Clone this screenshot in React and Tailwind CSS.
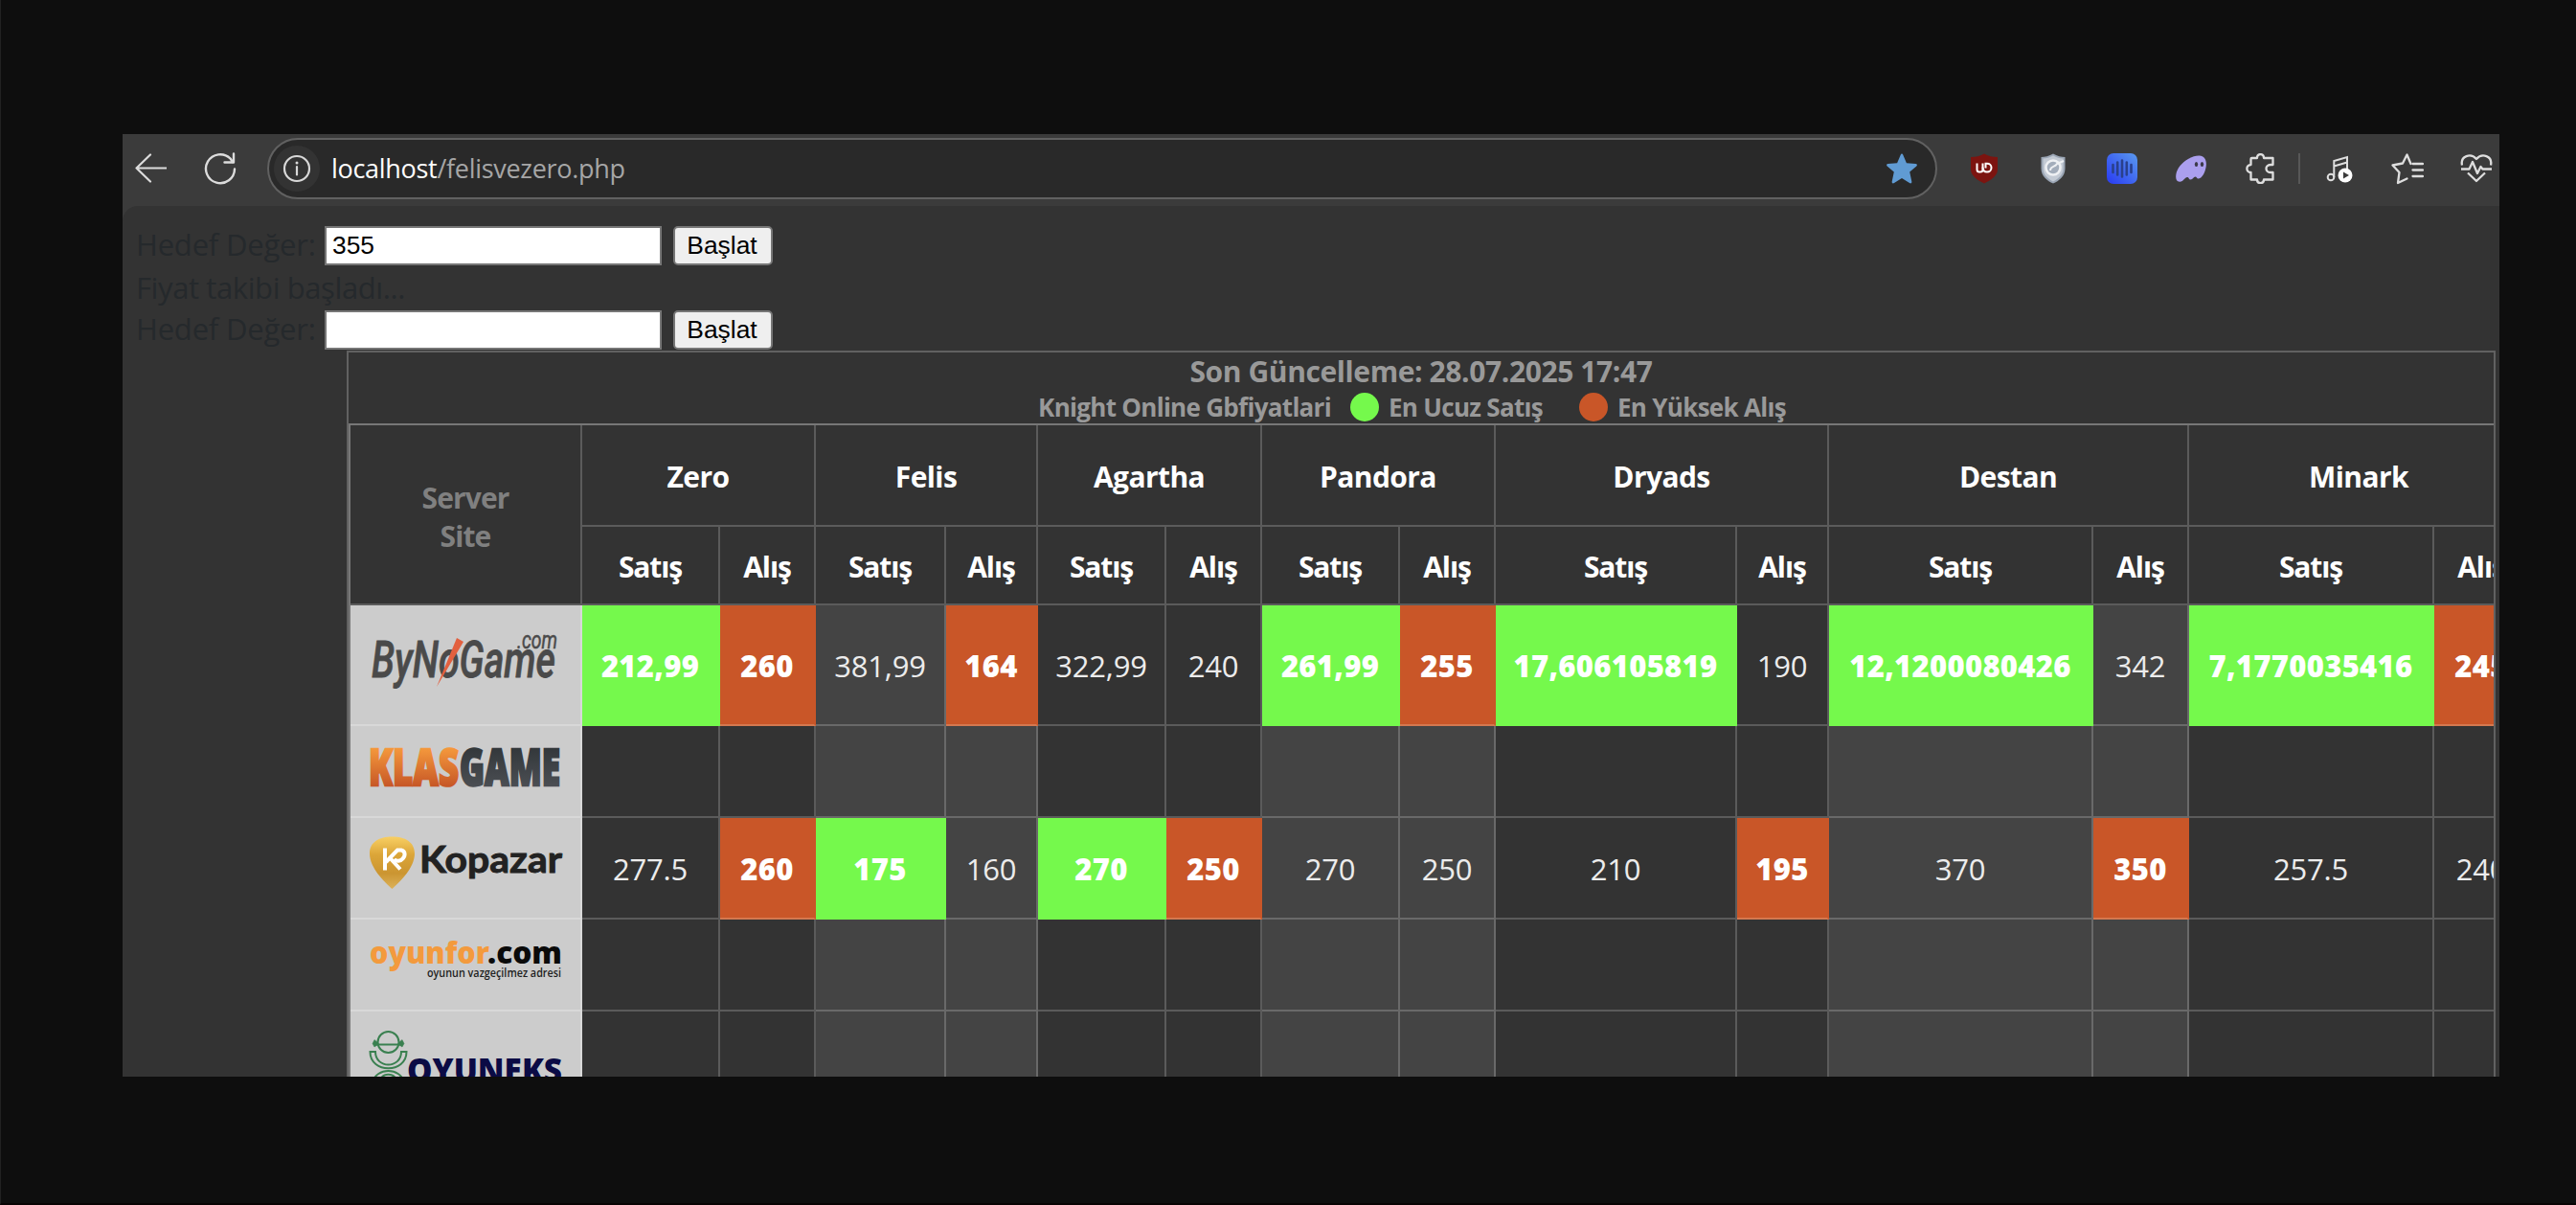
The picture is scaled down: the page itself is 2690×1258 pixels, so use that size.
import clsx from 'clsx';

const servers = ['Zero', 'Felis', 'Agartha', 'Pandora', 'Dryads', 'Destan', 'Minark'];

// [value, highlight] pairs ordered as Satış / Alış for every server
const bynogame = [
  ['212,99', 'low'], ['260', 'high'],
  ['381,99'], ['164', 'high'],
  ['322,99'], ['240'],
  ['261,99', 'low'], ['255', 'high'],
  ['17,606105819', 'low'], ['190'],
  ['12,1200080426', 'low'], ['342'],
  ['7,1770035416', 'low'], ['245', 'high'],
];

const kopazar = [
  ['277.5'], ['260', 'high'],
  ['175', 'low'], ['160'],
  ['270', 'low'], ['250', 'high'],
  ['270'], ['250'],
  ['210'], ['195', 'high'],
  ['370'], ['350', 'high'],
  ['257.5'], ['240'],
];

const empty = Array.from({ length: 14 }, () => ['']);

const ByNoGameLogo = () => (
  <svg width="240" height="124" viewBox="0 0 240 124">
    <g fill="#4a4a4a" stroke="#4a4a4a" fontFamily="Roboto, sans-serif" fontStyle="italic">
      <text x="22" y="75" fontSize="54" fontWeight="500" strokeWidth="0.8" textLength="192" lengthAdjust="spacingAndGlyphs">ByNoGame</text>
      <text x="174" y="45" fontSize="25" strokeWidth="0.5" textLength="42" lengthAdjust="spacingAndGlyphs">.com</text>
    </g>
    <path d="M111 34L118 38L90 85Z" fill="#e2603f" />
  </svg>
);

const KlasGameLogo = () => (
  <svg width="240" height="94" viewBox="0 0 240 94">
    <defs>
      <linearGradient id="klas" x1="0" y1="0" x2="0" y2="1">
        <stop offset="0.25" stopColor="#f4983c" />
        <stop offset="0.8" stopColor="#c65626" />
      </linearGradient>
      <linearGradient id="game" x1="0" y1="0" x2="0" y2="1">
        <stop offset="0.25" stopColor="#33383b" />
        <stop offset="0.8" stopColor="#4b4e53" />
      </linearGradient>
    </defs>
    <g fontFamily="'Open Sans', sans-serif" fontSize="53" fontWeight="800" strokeWidth="2.5">
      <text x="19" y="62" fill="url(#klas)" stroke="url(#klas)" textLength="94" lengthAdjust="spacingAndGlyphs">KLAS</text>
      <text x="114" y="62" fill="url(#game)" stroke="url(#game)" textLength="105" lengthAdjust="spacingAndGlyphs">GAME</text>
    </g>
  </svg>
);

const KopazarLogo = () => (
  <svg width="240" height="104" viewBox="0 0 240 104">
    <defs>
      <linearGradient id="pick" x1="0" y1="0" x2="0" y2="1">
        <stop offset="0" stopColor="#f8cf63" />
        <stop offset="0.35" stopColor="#dba538" />
        <stop offset="0.7" stopColor="#cb9531" />
        <stop offset="1" stopColor="#dcb25a" />
      </linearGradient>
    </defs>
    <path d="M43.500 19.500C57 19.500 67 25 67 37C67 52 52 66 43.500 74C35 66 20 52 20 37C20 25 30 19.500 43.500 19.500Z" fill="url(#pick)" />
    {/* Monogram: K stem and leg with a tilted P loop */}
    <g fill="none" stroke="#fff" strokeWidth="4">
      <path d="M36 31.500V54.500" />
      <path d="M37 46L49 33.500H53C57.500 34.500 57.500 39.500 54.500 42.500C52.500 45 48 46 45.500 43" />
      <path d="M41.500 42L52 53.500" />
    </g>
    <text x="72" y="57" fill="#222" fontFamily="Lato, sans-serif" fontWeight="700" fontSize="38" textLength="149" lengthAdjust="spacingAndGlyphs" stroke="#222" strokeWidth="0.9">Kopazar</text>
  </svg>
);

const OyunforLogo = () => (
  <svg width="240" height="94" viewBox="0 0 240 94">
    <g fontFamily="'Open Sans', sans-serif" fontWeight="800">
      <text x="20" y="46" fontSize="32" fill="#f39a3d" textLength="125" lengthAdjust="spacingAndGlyphs">oyunfor</text>
      <text x="143" y="46" fontSize="32" fill="#0a0a0a" textLength="78" lengthAdjust="spacingAndGlyphs">.com</text>
      <text x="80" y="60" fontSize="13" fontWeight="600" fill="#222" textLength="140" lengthAdjust="spacingAndGlyphs">oyunun vazgeçilmez adresi</text>
    </g>
  </svg>
);

const OyuneksLogo = () => (
  <svg width="240" height="94" viewBox="0 0 240 94">
    <g fill="none" stroke="#3a8050" strokeWidth="2">
      <circle cx="39.500" cy="32" r="11" />
      <path d="M26 34.500H53" />
      <path d="M25 29.500L28 32V35L25 37L23 33.500ZM54 29.500L51 32V35L54 37L56 33.500Z" fill="#3a8050" strokeWidth="0.5" />
      <path d="M20.500 42H26C26 60 53 60 53 42H58.500C58.500 65 20.500 65 20.500 42Z" />
      <path d="M23 74C27 58 52 58 56 74M30 74C33 63 46 63 49 74" />
    </g>
    <text x="59" y="74" fill="#0b0b45" fontFamily="'Open Sans', sans-serif" fontWeight="800" fontSize="36" textLength="162" lengthAdjust="spacingAndGlyphs">OYUNEKS</text>
  </svg>
);

const sites = [
  { logo: ByNoGameLogo, prices: bynogame },
  { logo: KlasGameLogo, prices: empty },
  { logo: KopazarLogo, prices: kopazar },
  { logo: OyunforLogo, prices: empty },
  { logo: OyuneksLogo, prices: empty },
];

const HeadCell = ({ className, children }) => (
  <div className={clsx('flex items-center justify-center border-r-2 border-b-2 border-[#5b5b5b] pt-0.5 text-[30px] font-bold', className)}>
    {children}
  </div>
);

const PriceCell = ({ value, highlight, shaded }) => (
  <div
    className={clsx(
      'flex items-center justify-center border-r-2 border-b-2 text-[31px] pt-[3px] whitespace-nowrap',
      highlight === 'low' && 'bg-[#75f94c] border-[#75f94c] font-extrabold tracking-[0.3px]',
      highlight === 'high' && 'bg-[#c95628] border-r-[#c95628] border-b-[#d4784f] font-extrabold tracking-[0.3px]',
      !highlight && 'tracking-[-0.2px] text-[#ececec]',
      !highlight && (shaded ? 'bg-[#444] border-[#696969]' : 'bg-[#333] border-[#5b5b5b]'),
    )}
  >
    {value}
  </div>
);

const TargetForm = ({ value }) => (
  <div className="flex h-[41px] items-stretch">
    <label className="flex w-[199px] items-center pb-1 pl-0.5 text-[31px] leading-9 tracking-[-0.2px] whitespace-nowrap">Hedef Değer:</label>
    <input
      readOnly
      value={value}
      className="w-[352px] border-2 border-[#767676] bg-white px-1.5 font-['Liberation_Sans',Arial,sans-serif] text-[26.4px] text-black outline-none"
    />
    <button className="ml-3 w-[104px] rounded-[5px] border-2 border-[#767676] bg-[#efefef] pr-0.5 font-['Liberation_Sans',Arial,sans-serif] text-[26.4px] leading-none text-black">
      Başlat
    </button>
  </div>
);

const Toolbar = () => (
  <div className="flex h-[75px] shrink-0 items-start bg-[#3b3b3b] pt-1">
    <div className="flex h-16 w-[151px] shrink-0 items-center pl-3">
      <svg width="34" height="32" viewBox="0 0 34 32" fill="none" stroke="#dcdcdc" strokeWidth="2.2" strokeLinecap="round" strokeLinejoin="round">
        <path d="M17 1.500L2.500 15.500L17 29.500M2.500 15.500H33.500" />
      </svg>
      <svg className="ml-[39px]" width="34" height="34" viewBox="0 0 34 34" fill="none" stroke="#dcdcdc" strokeWidth="2.400" strokeLinecap="round" strokeLinejoin="round">
        <path d="M32 17.500A15 15 0 1 1 27.500 6.500L30 10" />
        <path d="M31 1.500V10.500H21.500" />
      </svg>
    </div>

    {/* Address bar */}
    <div className="flex h-16 w-[1744px] shrink-0 items-center rounded-full border-2 border-[#616161] bg-[#292929] pl-[5px] pr-[19px]">
      <div className="flex h-12 w-12 items-center justify-center rounded-full bg-[#333]">
        <svg width="30" height="30" viewBox="0 0 30 30" fill="none" stroke="#d8d8d8" strokeWidth="2.2">
          <circle cx="15" cy="15" r="13" />
          <path d="M15 13V21.500" strokeLinecap="round" />
          <circle cx="15" cy="9" r="1.500" fill="#d8d8d8" stroke="none" />
        </svg>
      </div>
      <span className="ml-3 pt-px text-[27px] font-medium tracking-[-0.3px] text-white">
        localhost<span className="font-normal tracking-[-0.3px] text-[#a6a6a6]">/felisvezero.php</span>
      </span>
      <svg className="ml-auto" width="32" height="32" viewBox="0 0 32 32" fill="#609bd3">
        <path d="M16 0.500C16.600 0.500 17 1 17.300 1.700L20.900 10.200L30.500 11C32 11.200 32.400 12.600 31.300 13.500L24.200 19.500L26.300 29.500C26.600 31.200 25.400 32 24 31.100L16 26L8 31.100C6.600 32 5.400 31.200 5.700 29.500L7.800 19.500L0.700 13.500C-0.400 12.600 0 11.200 1.500 11L11.100 10.200L14.700 1.700C15 1 15.400 0.500 16 0.500Z" />
      </svg>
    </div>

    {/* Extensions */}
    <div className="ml-[33px] flex h-16 shrink-0 items-center gap-10">
      <svg width="32" height="32" viewBox="0 0 32 32">
        <path d="M16 0.500C20 3 25 4 30 4V17C30 24 22 28.500 16 31.500C10 28.500 2 24 2 17V4C7 4 12 3 16 0.500Z" fill="#7c1410" />
        <g fill="none" stroke="#fff" strokeWidth="2">
          <path d="M8.500 10.500V17C8.500 18.700 9.500 19.500 11 19.500H12C13.500 19.500 14.500 18.700 14.500 17V10.500" />
          <path d="M14.500 14.500C14.500 18 16.500 19.500 19 19.500C21.600 19.500 23.500 17.600 23.500 15C23.500 12.500 21.600 10.700 19 10.700H17.500V15.500" />
        </g>
      </svg>
      <svg width="32" height="32" viewBox="0 0 32 32">
        <path d="M16 0.500C20 3 25 4 28.500 4V16C28.500 24 22 29 16 31.500C10 29 3.500 24 3.500 16V4C7 4 12 3 16 0.500Z" fill="#9ba6b5" />
        <path d="M16 2.500C19.500 4.500 23 5.500 26.500 5.500V16C26.500 22.500 21 27 16 29.500C11 27 5.500 22.500 5.500 16V5.500C9 5.500 12.500 4.500 16 2.500Z" fill="#c3cad4" />
        <circle cx="16" cy="15" r="7.500" fill="#a3adbb" stroke="#eef0f3" strokeWidth="2.600" />
        <path d="M13 18C13 13 18 15 20 11L27 8" fill="none" stroke="#eef0f3" strokeWidth="2" />
      </svg>
      <svg width="32" height="32" viewBox="0 0 32 32">
        <defs>
          <linearGradient id="wave" x1="0" y1="1" x2="1" y2="0">
            <stop offset="0.1" stopColor="#2d43f2" />
            <stop offset="0.9" stopColor="#5590ee" />
          </linearGradient>
        </defs>
        <rect width="32" height="32" rx="7" fill="url(#wave)" />
        <path d="M6.500 12V20M11.200 9.500V22.500M16 7.500V24.500M20.800 9.500V22.500M25.500 12V20" stroke="#29408c" strokeWidth="2.600" strokeLinecap="round" />
      </svg>
      <svg width="32" height="32" viewBox="0 0 32 32">
        <path d="M24 2.500C29.500 2 32.500 6.500 31.800 13C31 20 27.500 26 24 26.500C22 27 22 24.500 20.500 24.500C18.500 24.500 18 27.500 15.500 27.500C13.500 27.500 14 25 12 25C9.500 25 8 30 4 29.700C0 29.500 -0.500 25 0.800 20C3.500 11 14 3 24 2.500Z" fill="#ab9fee" />
        <ellipse cx="21.500" cy="11.500" rx="1.700" ry="2.500" fill="#3c3a4a" />
        <ellipse cx="27.500" cy="11.500" rx="1.700" ry="2.500" fill="#3c3a4a" />
      </svg>
      <svg width="32" height="32" viewBox="0 0 32 32" fill="none" stroke="#dedede" strokeWidth="2.300" strokeLinejoin="round">
        <path d="M7.500 5H13C13 -0.200 20 -0.200 20 5H29.500V12H27C21 12 21 20 27 20H29.500V27.500H20C20 32.300 13 32.300 13 27.500H6.500V20C1 20 1 12 6.500 12V6C6.500 5.400 6.900 5 7.500 5Z" />
      </svg>
    </div>
    <div className="ml-6 mt-4 h-8 w-0.5 shrink-0 bg-[#575757]" />
    <div className="ml-6 flex h-16 shrink-0 items-center gap-[39px]">
      <svg width="32" height="32" viewBox="0 0 32 32" fill="none" stroke="#dedede" strokeWidth="2">
        <circle cx="8" cy="25" r="3.300" />
        <path d="M11.300 25V8L25 4V17M11.300 13.500L25 9.500" />
        <circle cx="23" cy="23" r="7.500" fill="#fff" stroke="none" />
        <path d="M21 19.500L27 23L21 26.500Z" fill="#3b3b3b" stroke="none" />
      </svg>
      <svg width="34" height="34" viewBox="0 0 34 34" fill="none" stroke="#dedede" strokeWidth="2.300" strokeLinecap="round" strokeLinejoin="round">
        <path d="M20.500 12L16.500 2.500L12 11.500L1.500 13.500L8.500 21L7 32L16.500 27.500" />
        <path d="M22.500 12H33M22.500 18.500H33M22.500 25H33" />
      </svg>
      <svg className="-ml-px" width="34" height="32" viewBox="0 0 34 32" fill="none" stroke="#dedede" strokeWidth="2.300" strokeLinejoin="round">
        <path d="M2 12.500C0 3 11 -1 17 6C23 -1 34 3 32 12.500" />
        <path d="M1 16.500H9.500L13 9L18 21L21.500 14L23.500 16.500H33" />
        <path d="M8 20.500L17 29L26 20.500" />
      </svg>
    </div>
  </div>
);

const PriceTable = () => (
  <div className="ml-[234px] mt-px w-[2244px] flex-1 overflow-hidden border-2 border-b-0 border-[#616161] text-white">
    <div className="h-[74px] font-bold text-[#999]">
      <div className="flex h-10 items-center justify-center text-[30px] leading-10 tracking-[-0.4px]">
        Son Güncelleme: 28.07.2025 17:47
      </div>
      <div className="flex h-[34px] items-center justify-center pr-[19px] text-[26px] leading-8 tracking-[-0.7px]">
        Knight Online Gbfiyatlari
        <span className="ml-5 mr-2.5 h-[30px] w-[30px] rounded-full bg-[#75f94c]" />
        En Ucuz Satış
        <span className="ml-[38px] mr-2.5 h-[30px] w-[30px] rounded-full bg-[#c95628]" />
        En Yüksek Alış
      </div>
    </div>

    <div className="grid w-[2280px] grid-cols-[242px_144px_100px_136px_96px_134px_100px_144px_100px_252px_96px_276px_100px_256px_100px] grid-rows-[106px_82px_126px_96px_106px_96px_96px] border-t-2 border-l-2 border-[#777]">
      <HeadCell className="row-span-2 flex-col pt-1.5 leading-10 tracking-[-0.9px] text-[#808080]">
        <span>Server</span>
        <span>Site</span>
      </HeadCell>
      {servers.map((name) => (
        <HeadCell key={name} className="col-span-2 tracking-[-0.6px]">{name}</HeadCell>
      ))}
      {servers.map((name) => [
        <HeadCell key={`${name}-sell`} className="tracking-[-1.1px]">Satış</HeadCell>,
        <HeadCell key={`${name}-buy`} className="tracking-[-1.1px]">Alış</HeadCell>,
      ])}
      {sites.map(({ logo: Logo, prices }, row) => [
        <div key={`logo-${row}`} className="border-r-2 border-b-2 border-[#d8d8d8] bg-[#ccc]">
          <Logo />
        </div>,
        ...prices.map(([value, highlight], i) => (
          <PriceCell key={`${row}-${i}`} value={value} highlight={highlight} shaded={Math.floor(i / 2) % 2 === 1} />
        )),
      ])}
    </div>
  </div>
);

export default function App() {
  return (
    <div className="h-[1258px] w-[2690px] overflow-hidden border-b-2 border-l border-b-[#080303] border-l-[#222] bg-[#0e0e0e] pl-[127px] pt-[140px] font-['Open_Sans','Noto_Sans',sans-serif]">
      <div className="flex h-[984px] w-[2482px] flex-col overflow-hidden bg-[#3b3b3b]">
        <Toolbar />
        <div className="flex min-h-0 flex-1 flex-col rounded-tl-2xl bg-[#333] pt-[21px] text-[#25292c]">
          <div className="pl-3">
            <TargetForm value="355" />
            <div className="flex h-[47px] items-center pl-0.5 text-[31px] tracking-[-0.4px]">Fiyat takibi başladı...</div>
            <TargetForm value="" />
          </div>
          <PriceTable />
        </div>
      </div>
    </div>
  );
}
